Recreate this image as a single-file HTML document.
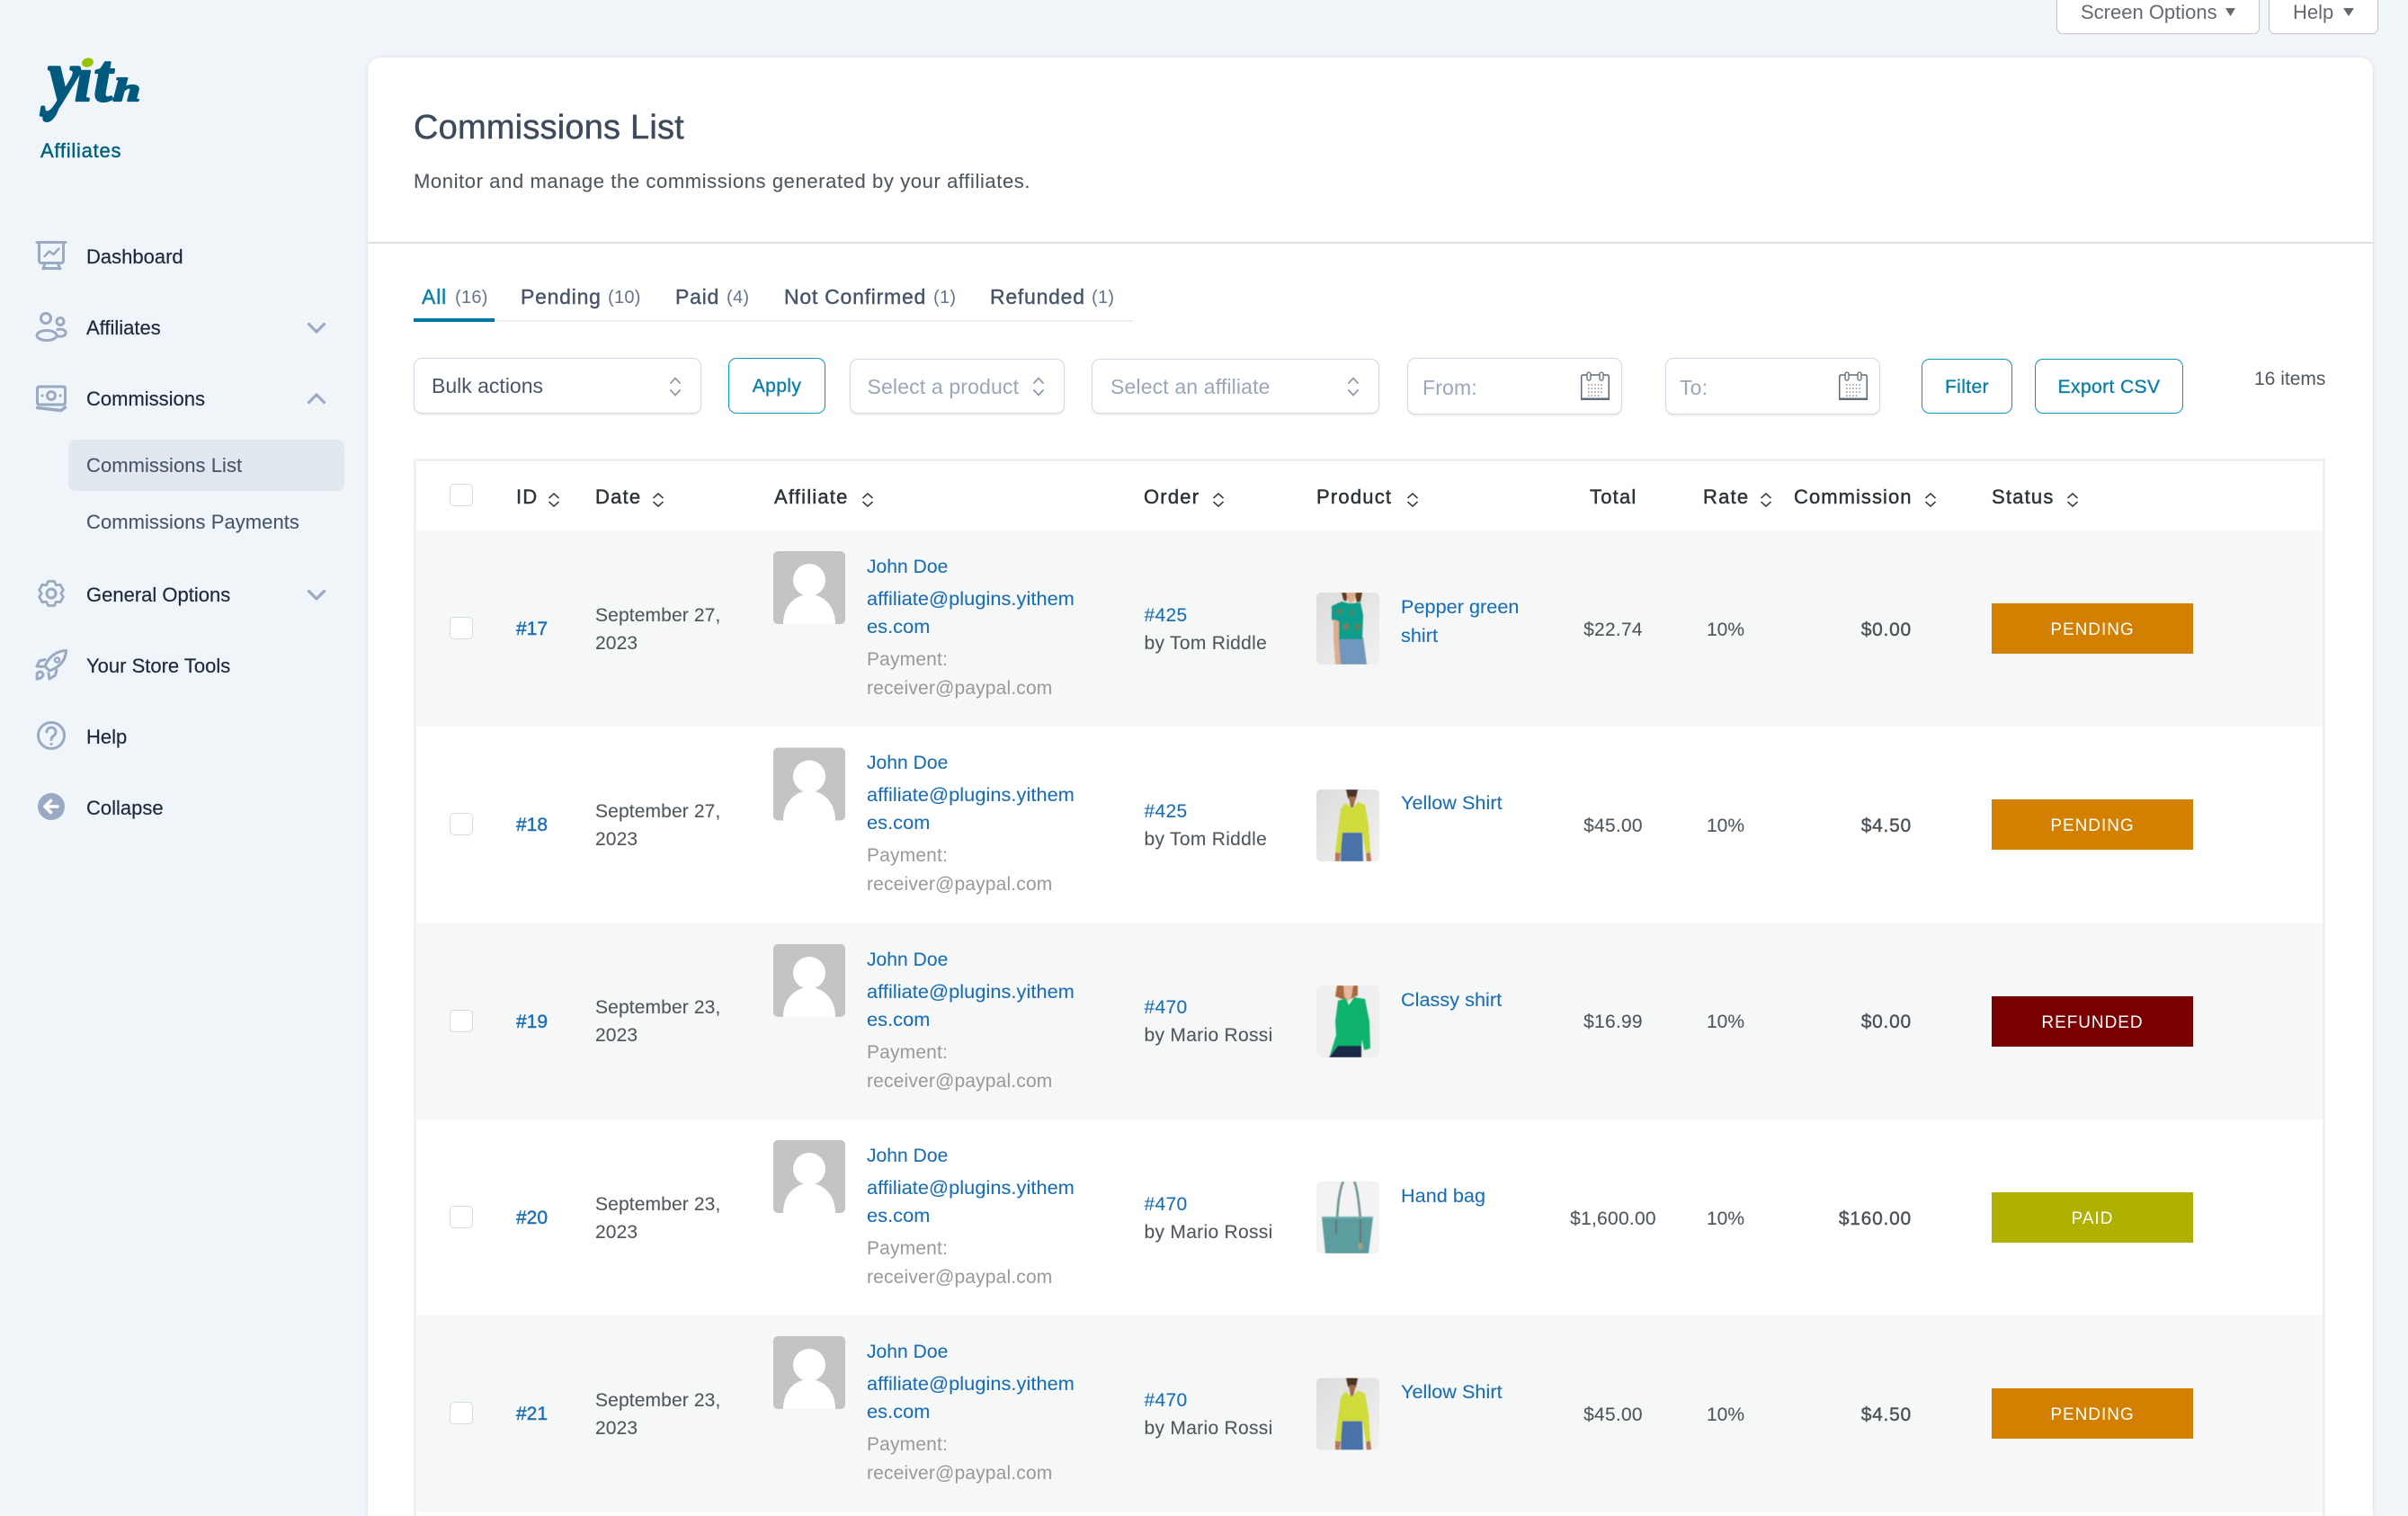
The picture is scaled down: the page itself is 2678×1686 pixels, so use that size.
<!DOCTYPE html>
<html lang="en"><head><meta charset="utf-8"><title>Commissions List</title>
<style>
*{box-sizing:border-box}
html{margin:0;padding:0;width:2678px;height:1686px;overflow:hidden}
body{margin:0;padding:0;width:2678px;height:1686px;position:relative;overflow:hidden;background:#f0f5fa;font-family:"Liberation Sans",Arial,sans-serif;color:#1e293b}
.t{position:absolute;white-space:nowrap;line-height:36px;height:36px}
.nav{font-size:22px;color:#1e293b;left:96px;-webkit-text-stroke:.2px}
.sub{font-size:22px;color:#475569;left:96px;letter-spacing:.05px;-webkit-text-stroke:.1px}
.card{position:absolute;left:409px;top:64px;width:2230px;height:1622px;background:#fff;border-radius:14px 14px 0 0;box-shadow:0 0 4px rgba(50,70,100,.14)}
.tab{font-size:23px;color:#475569;letter-spacing:.75px;-webkit-text-stroke:.4px;top:312px}
.cnt{font-size:20px;color:#64748b;top:313px;letter-spacing:.3px}
.box{position:absolute;background:#fff;border:1.5px solid #d3dae4;border-radius:9px;box-shadow:0 1.5px 2px rgba(60,80,110,.12)}
.btn{position:absolute;background:#fff;border:1.5px solid #0f94bd;border-radius:9px;color:#0b7ea8;font-size:21px;line-height:61px;text-align:center;letter-spacing:.4px;-webkit-text-stroke:.35px}
.ph{font-size:23px;color:#9aa7b8;letter-spacing:.15px}
.th{font-size:22px;color:#2c3338;letter-spacing:1.2px;-webkit-text-stroke:.45px;top:534.5px}
.tbl{position:absolute;left:460px;top:510px;width:2126px;height:1176px;border:solid #f0f0f1;border-width:3px 3px 0 3px;background:#fff}
.row{position:absolute;left:463px;width:2120px;height:218.4px}
.odd{background:#f6f7f7}
.r{font-size:21px;color:#50575e;-webkit-text-stroke:.1px}
.cb{position:absolute;left:37px;top:96px;width:26px;height:25px;background:#fff;border:1.5px solid #d5dbe5;border-radius:5px}
.id{left:111px;top:92px;color:#1a6eb4;font-size:21px;-webkit-text-stroke:.4px}
.d{left:199px;letter-spacing:.13px}
.a{left:501px;color:#1a6eb4;font-size:21px;letter-spacing:.05px;-webkit-text-stroke:.1px}
.e{font-size:21.7px;letter-spacing:.08px}
.g{left:501px;color:#999;font-size:21px;letter-spacing:.16px}
.o{left:809.5px;letter-spacing:.3px}
.l{color:#1a6eb4}
.p{left:1095px;top:67px;color:#1a6eb4;font-size:21.6px;letter-spacing:.05px;-webkit-text-stroke:.1px}
.tot{left:1251px;width:160px;text-align:center;top:92.5px;letter-spacing:.25px}
.rate{left:1435px;top:92.5px}
.com{left:1463px;width:200px;text-align:right;top:92.5px;-webkit-text-stroke:.4px;letter-spacing:.75px;color:#4a5158}
.b{position:absolute;left:1752px;top:81px;width:224px;height:56px;color:#fff;font-size:19px;line-height:59px;text-align:center;letter-spacing:.95px}
.top{position:absolute;top:-4px;height:42px;background:#fff;border:1.5px solid #c3c4c7;border-radius:0 0 7px 7px}
.ov{position:absolute;left:0;top:0;pointer-events:none}
</style></head><body>

<div class="t" style="left:45px;top:150px;font-size:22px;color:#00607f;-webkit-text-stroke:.4px;letter-spacing:.75px">Affiliates</div>

<div class="t nav" style="top:268px">Dashboard</div>
<div class="t nav" style="top:347px">Affiliates</div>
<div class="t nav" style="top:426px">Commissions</div>
<div style="position:absolute;left:76px;top:489px;width:307px;height:57px;background:#e2e8f0;border-radius:8px"></div>
<div class="t sub" style="top:500px">Commissions List</div>
<div class="t sub" style="top:563px">Commissions Payments</div>
<div class="t nav" style="top:644px">General Options</div>
<div class="t nav" style="top:723px">Your Store Tools</div>
<div class="t nav" style="top:802px">Help</div>
<div class="t nav" style="top:881px">Collapse</div>

<div class="top" style="left:2287px;width:226px"></div>
<div class="top" style="left:2523px;width:122px"></div>
<div class="t" style="left:2314px;top:-4px;font-size:22px;color:#646970">Screen Options</div>
<div class="t" style="left:2550px;top:-4px;font-size:22px;color:#646970">Help</div>

<div class="card"></div>
<div style="position:absolute;left:409px;top:269px;width:2230px;height:1.5px;background:#dcdfe4"></div>
<div class="t" style="left:460px;top:116.5px;height:50px;line-height:50px;font-size:38px;color:#3d4a5c;letter-spacing:.2px;-webkit-text-stroke:.45px">Commissions List</div>
<div class="t" style="left:460px;top:183.5px;font-size:22px;color:#50575e;letter-spacing:.6px;-webkit-text-stroke:.1px">Monitor and manage the commissions generated by your affiliates.</div>

<div style="position:absolute;left:460px;top:356px;width:801px;height:2px;background:#eef1f4"></div>
<div style="position:absolute;left:460px;top:354px;width:90px;height:3.5px;background:#007aa3"></div>
<div class="t tab" style="left:469px;color:#0b7ea8">All</div><div class="t cnt" style="left:506px">(16)</div>
<div class="t tab" style="left:579px">Pending</div><div class="t cnt" style="left:676px">(10)</div>
<div class="t tab" style="left:751px">Paid</div><div class="t cnt" style="left:808px">(4)</div>
<div class="t tab" style="left:872px">Not Confirmed</div><div class="t cnt" style="left:1038px">(1)</div>
<div class="t tab" style="left:1101px">Refunded</div><div class="t cnt" style="left:1214px">(1)</div>

<div class="box" style="left:460px;top:398px;width:320px;height:62px"></div>
<div class="t" style="left:480px;top:411px;font-size:23px;color:#4a5568">Bulk actions</div>
<div class="btn" style="left:810px;top:398px;width:108px;height:62px">Apply</div>
<div class="box" style="left:945px;top:399px;width:239px;height:61px"></div>
<div class="t ph" style="left:964.5px;top:412px">Select a product</div>
<div class="box" style="left:1214px;top:399px;width:320px;height:61px"></div>
<div class="t ph" style="left:1235px;top:412px">Select an affiliate</div>
<div class="box" style="left:1565px;top:398px;width:239px;height:63px"></div>
<div class="t ph" style="left:1582px;top:413px">From:</div>
<div class="box" style="left:1852px;top:398px;width:239px;height:63px"></div>
<div class="t ph" style="left:1868px;top:413px">To:</div>
<div class="btn" style="left:2137px;top:399px;width:101px;height:61px">Filter</div>
<div class="btn" style="left:2263px;top:399px;width:165px;height:61px">Export CSV</div>
<div class="t" style="left:2507px;top:404px;font-size:21px;color:#50575e">16 items</div>

<div class="tbl"></div>
<div style="position:absolute;left:500px;top:538px;width:26px;height:25px;background:#fff;border:1.5px solid #d5dbe5;border-radius:5px"></div>
<div class="t th" style="left:574px">ID</div>
<div class="t th" style="left:662px">Date</div>
<div class="t th" style="left:861px">Affiliate</div>
<div class="t th" style="left:1272px">Order</div>
<div class="t th" style="left:1464px">Product</div>
<div class="t th" style="left:1768px">Total</div>
<div class="t th" style="left:1894px">Rate</div>
<div class="t th" style="left:1995px;letter-spacing:1.05px">Commission</div>
<div class="t th" style="left:2215px">Status</div>

<div class="row odd" style="top:590px">
<div class="cb"></div><div class="t id">#17</div>
<div class="t r d" style="top:76.5px">September 27,</div><div class="t r d" style="top:107.5px">2023</div>
<div class="t a" style="top:23px">John Doe</div><div class="t a e" style="top:58px">affiliate@plugins.yithem</div><div class="t a e" style="top:89px">es.com</div>
<div class="t g" style="top:126px">Payment:</div><div class="t g" style="top:158px">receiver@paypal.com</div>
<div class="t r o l" style="top:76.5px">#425</div><div class="t r o" style="top:107.5px">by Tom Riddle</div>
<div class="t p">Pepper green</div><div class="t p" style="top:99px">shirt</div>
<div class="t r tot">$22.74</div><div class="t r rate">10%</div><div class="t r com">$0.00</div>
<div class="b" style="background:#d38000">PENDING</div>
</div>

<div class="row" style="top:808px">
<div class="cb"></div><div class="t id">#18</div>
<div class="t r d" style="top:76.5px">September 27,</div><div class="t r d" style="top:107.5px">2023</div>
<div class="t a" style="top:23px">John Doe</div><div class="t a e" style="top:58px">affiliate@plugins.yithem</div><div class="t a e" style="top:89px">es.com</div>
<div class="t g" style="top:126px">Payment:</div><div class="t g" style="top:158px">receiver@paypal.com</div>
<div class="t r o l" style="top:76.5px">#425</div><div class="t r o" style="top:107.5px">by Tom Riddle</div>
<div class="t p">Yellow Shirt</div>
<div class="t r tot">$45.00</div><div class="t r rate">10%</div><div class="t r com">$4.50</div>
<div class="b" style="background:#d38000">PENDING</div>
</div>

<div class="row odd" style="top:1026.6px">
<div class="cb"></div><div class="t id">#19</div>
<div class="t r d" style="top:76.5px">September 23,</div><div class="t r d" style="top:107.5px">2023</div>
<div class="t a" style="top:23px">John Doe</div><div class="t a e" style="top:58px">affiliate@plugins.yithem</div><div class="t a e" style="top:89px">es.com</div>
<div class="t g" style="top:126px">Payment:</div><div class="t g" style="top:158px">receiver@paypal.com</div>
<div class="t r o l" style="top:76.5px">#470</div><div class="t r o" style="top:107.5px">by Mario Rossi</div>
<div class="t p">Classy shirt</div>
<div class="t r tot">$16.99</div><div class="t r rate">10%</div><div class="t r com">$0.00</div>
<div class="b" style="background:#780000">REFUNDED</div>
</div>

<div class="row" style="top:1245px">
<div class="cb"></div><div class="t id">#20</div>
<div class="t r d" style="top:76.5px">September 23,</div><div class="t r d" style="top:107.5px">2023</div>
<div class="t a" style="top:23px">John Doe</div><div class="t a e" style="top:58px">affiliate@plugins.yithem</div><div class="t a e" style="top:89px">es.com</div>
<div class="t g" style="top:126px">Payment:</div><div class="t g" style="top:158px">receiver@paypal.com</div>
<div class="t r o l" style="top:76.5px">#470</div><div class="t r o" style="top:107.5px">by Mario Rossi</div>
<div class="t p">Hand bag</div>
<div class="t r tot">$1,600.00</div><div class="t r rate">10%</div><div class="t r com">$160.00</div>
<div class="b" style="background:#b0b000">PAID</div>
</div>

<div class="row odd" style="top:1463px">
<div class="cb"></div><div class="t id">#21</div>
<div class="t r d" style="top:76.5px">September 23,</div><div class="t r d" style="top:107.5px">2023</div>
<div class="t a" style="top:23px">John Doe</div><div class="t a e" style="top:58px">affiliate@plugins.yithem</div><div class="t a e" style="top:89px">es.com</div>
<div class="t g" style="top:126px">Payment:</div><div class="t g" style="top:158px">receiver@paypal.com</div>
<div class="t r o l" style="top:76.5px">#470</div><div class="t r o" style="top:107.5px">by Mario Rossi</div>
<div class="t p">Yellow Shirt</div>
<div class="t r tot">$45.00</div><div class="t r rate">10%</div><div class="t r com">$4.50</div>
<div class="b" style="background:#d38000">PENDING</div>
</div>

<svg class="ov" width="2678" height="1686" viewBox="0 0 2678 1686" xmlns="http://www.w3.org/2000/svg">
<defs>
<clipPath id="ci"><rect width="70" height="80" rx="5"/></clipPath>
<clipPath id="ca"><rect width="80" height="81" rx="5"/></clipPath>
<linearGradient id="bg1" x1="0" x2="1" y1="0" y2="1"><stop offset="0" stop-color="#dcdcdc"/><stop offset="1" stop-color="#f1f1f1"/></linearGradient>
<filter id="sf"><feGaussianBlur stdDeviation=".45"/></filter>
<symbol id="av" width="80" height="81" overflow="visible"><g clip-path="url(#ca)"><rect width="80" height="81" fill="#c4c4c4"/><ellipse cx="40" cy="32" rx="18" ry="18" fill="#fff"/><path d="M11 81C11 60 25 48 40 48S69 60 69 81Z" fill="#fff"/></g></symbol>
<symbol id="p1" width="70" height="80" overflow="visible"><g clip-path="url(#ci)"><rect width="70" height="80" fill="url(#bg1)"/><g filter="url(#sf)"><path d="M23 50H52L56 80H24Z" fill="#7297bf"/><path d="M28 0H51L49 10L45 11L43 3H35L33 10L30 8Z" fill="#5e3a22"/><path d="M33 0H44L42 9L38 12L35 9Z" fill="#dcae8f"/><path d="M17 15L28 10L36 12L41 12L49 11L52 25L51 52H23L24 34L17 30Z" fill="#0f9d8a"/><path d="M19 30L25 32L25 55L27 80H21L19 50Z" fill="#dcae8f"/><circle cx="26" cy="21" r="3" fill="#6a7a55"/><circle cx="33" cy="38" r="3.5" fill="#7a7a5a"/><circle cx="46" cy="38" r="3" fill="#6a7a55"/><circle cx="40" cy="22" r="2" fill="#6a7a55"/></g></g></symbol>
<symbol id="p2" width="70" height="80" overflow="visible"><g clip-path="url(#ci)"><rect width="70" height="80" fill="url(#bg1)"/><g filter="url(#sf)"><path d="M33 0H46L44 10L40 16L35 9Z" fill="#4a3325"/><path d="M36 8H44L41 20L38 20Z" fill="#a06a48"/><path d="M28 46H51L52 80H27Z" fill="#4a72a8"/><path d="M21 70H27L26 80H21ZM55 70H60L61 80H56Z" fill="#b9775a"/><path d="M32 15L38 20L41 20L46 14L54 17L58 40L60 70L55 71L51 48H29L27 71L21 70L24 45L27 22Z" fill="#cfdc3a"/></g></g></symbol>
<symbol id="p3" width="70" height="80" overflow="visible"><g clip-path="url(#ci)"><rect width="70" height="80" fill="#efefef"/><g filter="url(#sf)"><path d="M23 0H46L46 11L38 15H28L21 12Z" fill="#a9683c"/><path d="M30 0H41L39 13L35 18L31 12Z" fill="#e6b79a"/><path d="M14 80L24 66H50L50 80Z" fill="#1e2a4a"/><path d="M24 17L33 14L36 22L42 13L54 15L59 40L60 70L53 72L51 60L50 67H24L15 78L22 55L21 40Z" fill="#0db36d"/></g></g></symbol>
<symbol id="p4" width="70" height="80" overflow="visible"><g clip-path="url(#ci)"><rect width="70" height="80" fill="#f3f3f3"/><g filter="url(#sf)"><path d="M23 42C24 20 27 5 30 0M49 42C47 20 45 5 42 0" fill="none" stroke="#6d9695" stroke-width="2.6"/><path d="M6 39H63L58 80H10Z" fill="#5b9ea0"/><path d="M6 39H63V41H6Z" fill="#6fb0b1"/><path d="M22 42V58M49 42V68" stroke="#68756f" stroke-width="2"/><ellipse cx="49" cy="72" rx="2.5" ry="4" fill="#a79d7d"/></g></g></symbol>
<symbol id="cal" width="32" height="32" overflow="visible"><rect x=".75" y="4" width="30.5" height="27" rx="1.5" fill="#fff" stroke="#5f6b7a" stroke-width="1.5"/><rect y="29.5" width="32" height="2.5" fill="#5f6b7a"/><path d="M9 1a2 2 0 0 1 2 2v5a2 2 0 0 1-4 0V3a2 2 0 0 1 2-2ZM23 1a2 2 0 0 1 2 2v5a2 2 0 0 1-4 0V3a2 2 0 0 1 2-2Z" fill="#fff" stroke="#5f6b7a" stroke-width="1.3"/><path d="M8 15H26M8 19H26M8 23H26M8 27H22" stroke="#8a94a3" stroke-width="1.6" stroke-dasharray="1.6 2" fill="none"/></symbol>
<symbol id="s" width="14" height="16" overflow="visible"><path d="M1.5 6L7 1L12.5 6M1.5 10L7 15L12.5 10" fill="none" stroke="#3c434a" stroke-width="1.6"/></symbol>
<symbol id="sel" width="14" height="22" overflow="visible"><path d="M1.5 7.5L7 1.5L12.5 7.5M1.5 14.5L7 20.5L12.5 14.5" fill="none" stroke="#8c98a9" stroke-width="1.7"/></symbol>
</defs>

<g font-family="'Liberation Serif',serif" font-weight="bold" font-style="italic" fill="#005a7e" stroke="#005a7e" stroke-width="2.2" stroke-linejoin="round">
<text transform="translate(53 112) scale(1.12 1.12)" font-size="72">y</text>
<text x="83" y="112" font-size="72">ı</text>
<text x="104" y="112" font-size="76">t</text>
<text transform="translate(126 112) scale(1.5 1)" font-size="36">h</text>
</g>
<path d="M66 118C64 128 58 136 52 136C47 136 46 131 49 127C52 124 58 122 66 118Z" fill="#005a7e"/>
<ellipse cx="97.5" cy="69.5" rx="6.5" ry="5" fill="#97c400" transform="rotate(-15 97.5 69.5)"/>

<g fill="none" stroke="#9aaac2" stroke-width="3" stroke-linecap="round" stroke-linejoin="round">
<path d="M41 269.5H73M43.5 270V290a2.5 2.5 0 0 0 2.5 2.5H68a2.5 2.5 0 0 0 2.5-2.5V270M48 298.5H67M50 293L48 299M64.5 293L66.5 299"/>
<path d="M49.5 285L55 279.5L59.5 283L65.5 276.5" stroke-width="2.5"/>
<circle cx="51" cy="354" r="5.5"/><circle cx="67" cy="357.5" r="4"/>
<ellipse cx="52" cy="373" rx="11" ry="5.5"/><path d="M64 366.5C70 365 74 368 73 371C72 374 68 374.5 64 374"/>
<rect x="41.5" y="430" width="31" height="20" rx="2"/><circle cx="57" cy="440" r="4.5"/>
<path d="M47 440H47.2M67 440H67.2"/>
<path d="M41.5 453.5L68 456.5L72.5 453" stroke-width="3.5"/>
<path transform="translate(57 660) scale(.93)" d="M3.63-14.55L-3.63-14.55L-5.75-9.96L-10.79-10.42L-14.42-4.13L-11.5 0L-14.42 4.13L-10.79 10.42L-5.75 9.96L-3.63 14.55L3.63 14.55L5.75 9.96L10.79 10.42L14.42 4.13L11.5 0L14.42-4.13L10.79-10.42L5.75-9.96Z"/>
<circle cx="57" cy="660" r="5"/>
<path d="M73.5 723.5C62 724 54 731 50 741L55 746C66 742 73 735 73.5 723.5Z"/>
<circle cx="63.5" cy="734" r="2.6" stroke-width="2.4"/>
<path d="M50 733.5L44 735L41 741L48 741.5M63 745L61.5 751L55 755L54 749M41.5 748.5C44 746 47 747 48 750C48 753 44.5 755 41 755C41 752 41 750 41.5 748.5Z"/>
<circle cx="57" cy="818" r="14.5"/>
<path d="M52 814a5 5 0 1 1 8 4c-2 1.5-3 2.5-3 4.5"/><path d="M57 827.5H57.2"/>
<path d="M343.5 360.5L352 369L360.5 360.5M343.5 447.5L352 439L360.5 447.5M343.5 657.5L352 666L360.5 657.5" stroke-width="3.2"/>
</g>
<circle cx="57" cy="897" r="15" fill="#9aaac2"/>
<path d="M64 897H50.5M56.5 890.5L50 897L56.5 903.5" fill="none" stroke="#fff" stroke-width="3.6" stroke-linecap="round" stroke-linejoin="round"/>

<path d="M2475 9H2486L2480.5 18ZM2606 9H2618L2612 18Z" fill="#646970"/>

<use href="#sel" x="744" y="419"/><use href="#sel" x="1148" y="419"/><use href="#sel" x="1498" y="419"/>
<use href="#cal" x="1758" y="413"/><use href="#cal" x="2045" y="413"/>
<use href="#s" x="609" y="548"/><use href="#s" x="725" y="548"/><use href="#s" x="958" y="548"/><use href="#s" x="1348" y="548"/><use href="#s" x="1564" y="548"/><use href="#s" x="1957" y="548"/><use href="#s" x="2140" y="548"/><use href="#s" x="2298" y="548"/>

<use href="#av" x="860" y="613"/><use href="#av" x="860" y="831.5"/><use href="#av" x="860" y="1050"/><use href="#av" x="860" y="1268"/><use href="#av" x="860" y="1486"/>
<use href="#p1" x="1464" y="659"/><use href="#p2" x="1464" y="878"/><use href="#p3" x="1464" y="1096"/><use href="#p4" x="1464" y="1314"/><use href="#p2" x="1464" y="1532.5"/>
</svg>
</body></html>
